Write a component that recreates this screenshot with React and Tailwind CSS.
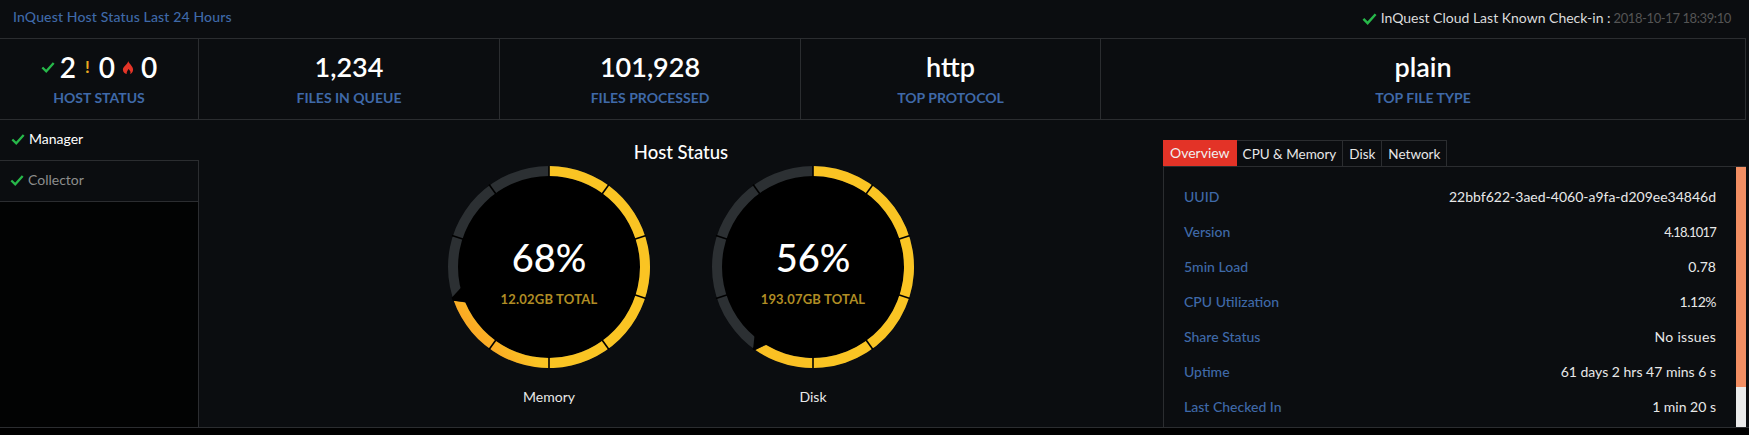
const stats = [
  { value: "1,234", label: "FILES IN QUEUE", width: "w-[301px]" },
  { value: "101,928", label: "FILES PROCESSED", width: "w-[301px]" },
  { value: "http", label: "TOP PROTOCOL", width: "w-[300px]" },
  { value: "plain", label: "TOP FILE TYPE", width: "flex-1" },
]

const rows = [
  { label: "UUID", value: "22bbf622-3aed-4060-a9fa-d209ee34846d" },
  { label: "Version", value: "4.18.1017", tight: "text-[13px] tracking-[-0.8px]" },
  { label: "5min Load", value: "0.78" },
  { label: "CPU Utilization", value: "1.12%", tight: "tracking-[-0.5px]" },
  { label: "Share Status", value: "No issues", tight: "tracking-[0.3px]" },
  { label: "Uptime", value: "61 days 2 hrs 47 mins 6 s" },
  { label: "Last Checked In", value: "1 min 20 s" },
]

const tabs = ["CPU & Memory", "Disk", "Network"]

function polar(r, deg) {
  const a = ((deg - 90) * Math.PI) / 180
  return [101 + r * Math.cos(a), 101 + r * Math.sin(a)]
}

function ring(r0, r1) {
  const [ax, ay] = polar(r1, 0)
  const [bx, by] = polar(r1, 180)
  const [cx, cy] = polar(r0, 0)
  const [dx, dy] = polar(r0, 180)
  return `M${ax} ${ay}A${r1} ${r1} 0 1 1 ${bx} ${by}A${r1} ${r1} 0 1 1 ${ax} ${ay}ZM${cx} ${cy}A${r0} ${r0} 0 1 0 ${dx} ${dy}A${r0} ${r0} 0 1 0 ${cx} ${cy}Z`
}

function CheckMark({ size = 15 }) {
  return (
    <svg width={size} height={size} viewBox="0 0 16 16" className="shrink-0">
      <path d="M1.5 8.5 L6 13 L14.5 3.5" fill="none" stroke="#27b84a" strokeWidth="2.6" />
    </svg>
  )
}

function FlameIcon() {
  return (
    <svg width="12" height="13" viewBox="0 0 11 13" className="shrink-0">
      <path
        d="M5.8 0 C6 2.4 10.6 5 10.6 8.6 C10.6 11 9 12.6 7.6 13 C8.6 11 7.6 9.6 6 8 C5.4 9.6 3.8 10.6 4.2 13 C2 12.6 0.4 11 0.4 8.6 C0.4 5.6 5 3.6 5.8 0 Z"
        fill="#e53528"
      />
    </svg>
  )
}

function Gauge({ percent, total, name, endOuter, endInner, greyOuter, greyInner, id, stop }) {
  const ticks = [0, 36, 72, 108, 144, 180, 216, 252, 288, 324]
  const large = endOuter > 180 ? 1 : 0
  return (
    <div className="flex w-[202px] flex-col items-center">
      <div className="relative h-[202px] w-[202px]">
        <svg width="202" height="202" viewBox="0 0 202 202" className="block">
          <defs>
            <linearGradient id={id} x1="0.8" y1="0.2" x2="0.1" y2="0.8">
              <stop offset="0.85" stopColor="#fac423" />
              <stop offset="1" stopColor={stop} />
            </linearGradient>
          </defs>
          <circle cx="101" cy="101" r="92" fill="#000" />
          <path d={ring(91, 101)} fill="#2c3033" fillRule="evenodd" />
          <path
            d={`M${polar(101, 0).join(" ")}A101 101 0 ${large} 1 ${polar(101, endOuter).join(" ")}L${polar(91, endInner).join(" ")}A91 91 0 ${large} 0 ${polar(91, 0).join(" ")}Z`}
            fill={`url(#${id})`}
          />
          {ticks.map((t) => {
            const [x0, y0] = polar(90, t)
            const [x1, y1] = polar(102, t)
            return <line key={t} x1={x0} y1={y0} x2={x1} y2={y1} stroke="#000" strokeWidth="1.6" />
          })}
          <path
            d={`M${polar(102, endOuter).join(" ")}L${polar(102, greyOuter).join(" ")}L${polar(90, greyInner).join(" ")}L${polar(90, endInner).join(" ")}Z`}
            fill="#000"
          />
        </svg>
        <div className="absolute inset-0 flex flex-col items-center pt-[68px]">
          <div className="text-[38px] font-medium leading-[46px] text-white">{percent}</div>
          <div className="mt-[11px] text-[13px] font-bold leading-4 tracking-[0.2px] text-[#b08d24]">{total}</div>
        </div>
      </div>
      <div className="mt-[21px] text-[14px] leading-4 text-[#e8e8e8]">{name}</div>
    </div>
  )
}

export default function App() {
  return (
    <div className="h-[435px] w-[1749px] overflow-hidden bg-black font-['Lato',sans-serif]">
      <div className="h-[428px] border-b border-[#2b2d30] bg-[#0b0d10] pr-[3px]">
        {/* Header */}
        <header className="flex h-[38px] items-start justify-between pl-[13px] pr-[15px] pt-[9px] text-[14px] leading-4">
          <span className="font-medium tracking-[0.15px] text-[#3f69a8]">InQuest Host Status Last 24 Hours</span>
          <span className="flex items-center pt-[1px]">
            <CheckMark />
            <span className="ml-[4px] text-[#dcdcdc]">InQuest Cloud Last Known Check-in :</span>
            <span className="ml-[3px] text-[13px] tracking-[-0.4px] text-[#555555]">2018-10-17 18:39:10</span>
          </span>
        </header>

        {/* Stats Row */}
        <div className="flex h-[82px] border-y border-r border-[#2b2d30]">
          <div className="flex w-[199px] flex-col items-center border-r border-[#2b2d30] pt-[12px]">
            <div className="flex h-[32px] items-center text-[28px] font-semibold leading-8 text-white">
              <CheckMark size={14} />
              <span className="ml-[5px]">2</span>
              <span className="mx-[9px] text-[17px] font-bold text-[#eaa921]">!</span>
              <span>0</span>
              <span className="mx-[7px]"><FlameIcon /></span>
              <span>0</span>
            </div>
            <div className="mt-[7px] text-[14px] font-bold leading-4 text-[#3f69a8]">HOST STATUS</div>
          </div>
          {stats.map((s, i) => (
            <div
              key={s.label}
              className={`flex flex-col items-center pt-[12px] ${s.width} ${i < 3 ? "border-r border-[#2b2d30]" : ""}`}
            >
              <div className="h-[32px] text-[27px] font-semibold leading-8 text-white">{s.value}</div>
              <div className="mt-[7px] text-[14px] font-bold leading-4 text-[#3f69a8]">{s.label}</div>
            </div>
          ))}
        </div>

        <div className="flex h-[307px]">
          {/* Sidebar */}
          <aside className="flex w-[199px] flex-col">
            <div className="flex h-[41px] items-center border-b border-[#2b2d30] pb-[3px] pl-[11px] text-[14px] text-white">
              <span className="mr-[4px]"><CheckMark size={14} /></span>
              Manager
            </div>
            <div className="flex h-[41px] items-center border-b border-r border-[#2b2d30] pb-[3px] pl-[10px] text-[14px] text-[#8d8d8d]">
              <span className="mr-[4px]"><CheckMark size={14} /></span>
              Collector
            </div>
            <div className="flex-1 border-r border-[#2b2d30] bg-[#020303]" />
          </aside>

          {/* Gauges */}
          <main className="flex w-[964px] flex-col items-center pt-[20px]">
            <h2 className="text-[18.5px] font-medium leading-[24px] text-white">Host Status</h2>
            <div className="mt-[2px] flex gap-[62px]">
              <Gauge id="memory" stop="#fbab24" percent="68%" total="12.02GB TOTAL" name="Memory" endOuter={250.7} endInner={247} greyOuter={252.5} greyInner={257} />
              <Gauge id="disk" stop="#fac023" percent="56%" total="193.07GB TOTAL" name="Disk" endOuter={215} endInner={211} greyOuter={216} greyInner={220.5} />
            </div>
          </main>

          {/* Detail tabs */}
          <section className="flex flex-1 flex-col pt-[20px]">
            <div className="flex h-[27px] border-b border-[#2b2d30] text-[13.5px] leading-[26px]">
              <div className="bg-[#e33327] px-[7px] text-[14px] text-[#f0f0f0]">Overview</div>
              {tabs.map((t) => (
                <div key={t} className="border-r border-t border-[#2b2d30] px-[6px] text-[#e8e8e8]">{t}</div>
              ))}
            </div>
            <div className="relative flex-1 overflow-hidden border-l border-[#2b2d30] pl-[20px] pr-[30px] pt-[17px]">
              {rows.map((r) => (
                <div key={r.label} className="flex h-[35px] justify-between text-[14px] leading-[26px]">
                  <span className="font-medium text-[#3f69a8]">{r.label}</span>
                  <span className={`text-[#e8e8e8] ${r.tight || ""}`}>{r.value}</span>
                </div>
              ))}
              <div className="absolute bottom-0 right-0 top-0 w-[10px] bg-[#ebebeb]">
                <div className="h-[220px] bg-[#f28e63]" />
              </div>
            </div>
          </section>
        </div>
      </div>
    </div>
  )
}
